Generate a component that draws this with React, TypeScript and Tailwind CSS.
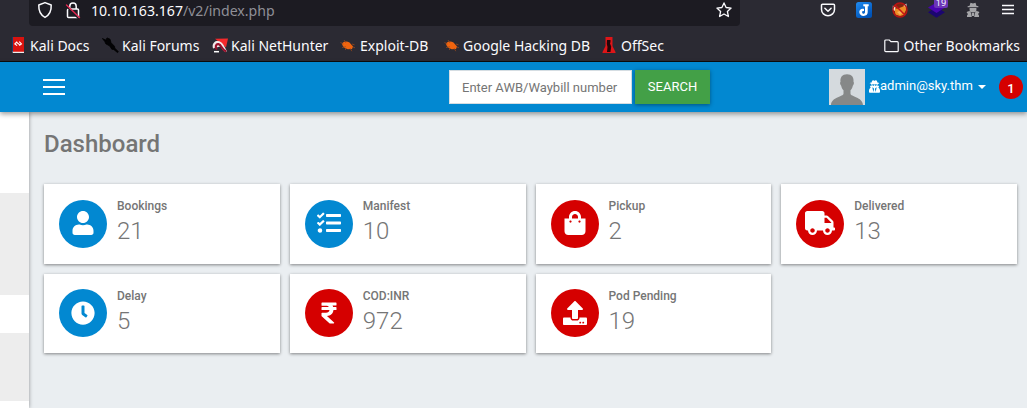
import type { ReactNode } from 'react';
import {
  FaClock,
  FaRupeeSign,
  FaShoppingBag,
  FaTasks,
  FaTruck,
  FaUpload,
  FaUser,
  FaUserSecret,
} from 'react-icons/fa';

const BLUE = 'bg-[#0288d1]';
const RED = 'bg-[#d50000]';

function Shield() {
  return (
    <svg width="16" height="18" viewBox="0 0 16 18" fill="none" stroke="#fbfbfe" strokeWidth="1.5" strokeLinejoin="round">
      <path d="M8 1.600 14.200 4c.3 5.600-1.900 10-6.200 12.400C3.700 14 1.500 9.600 1.800 4z" />
    </svg>
  );
}

function BrokenLock() {
  return (
    <svg width="16" height="18" viewBox="0 0 16 18" fill="none">
      <path d="M4.800 8V5.200a3.200 3.200 0 0 1 6.400 0V8M3.500 8h9a1 1 0 0 1 1 1v6.500a1 1 0 0 1-1 1h-9a1 1 0 0 1-1-1V9a1 1 0 0 1 1-1z" stroke="#fbfbfe" strokeWidth="1.500" />
      <path d="m1.500 5.500 13 13" stroke="#1c1b22" strokeWidth="1.500" />
      <path d="m1.500 4 13 12.500" stroke="#e22850" strokeWidth="1.400" strokeLinecap="round" />
    </svg>
  );
}

function Star() {
  return (
    <svg width="16" height="16" viewBox="0 0 16 16" fill="none" stroke="#fbfbfe" strokeWidth="1.300" strokeLinejoin="round">
      <path d="m8 .9 2.100 4.600 5 .6-3.700 3.400 1 5L8 12l-4.400 2.500 1-5L.9 6.100l5-.6z" />
    </svg>
  );
}

function Pocket() {
  return (
    <svg width="16" height="14" viewBox="0 0 16 14" fill="none" stroke="#fbfbfe" strokeWidth="1.500" strokeLinecap="round" strokeLinejoin="round">
      <path d="M2.500 1.200h11a1 1 0 0 1 1 1V6.500a6.500 6.200 0 0 1-13 0V2.200a1 1 0 0 1 1-1z" />
      <path d="m4.900 5.300 3.100 3 3.100-3" />
    </svg>
  );
}

function JoplinTile() {
  return (
    <svg width="16" height="16" viewBox="0 0 16 16">
      <defs>
        <linearGradient id="tile" x1="0" y1="0" x2="0.600" y2="1">
          <stop offset="0" stopColor="#1f8bf0" />
          <stop offset="1" stopColor="#0053b8" />
        </linearGradient>
      </defs>
      <rect width="16" height="16" rx="2.500" fill="url(#tile)" />
      <path d="M7.300 2.300h5.400v2h-1v6c0 2.200-1.700 3.600-4 3.600-2.600 0-4.400-1.500-4.400-3.900 0-2 1.400-3.300 3.300-3.300.7 0 1.100.1 1.400.3v2.200c-1.200-.3-1.900.1-1.900 1s.6 1.500 1.500 1.500 1.400-.6 1.400-1.700V5c0-.5-.2-.7-.7-.7h-1z" fill="#fff" />
    </svg>
  );
}

function BlockedFox() {
  return (
    <svg width="16" height="16" viewBox="0 0 16 16">
      <circle cx="8" cy="8" r="7" fill="#7f2410" />
      <path d="M2.200 6 5 6.700l5-1.700 3.800-2 .2 5-2.500 5L8 14l-4.500-1.500z" fill="#ef8b24" />
      <path d="M.8 3.500 3.500 5 2.500 9 .8 8zM11.500 3.500l3-2v4.500z" fill="#f6e8d8" />
      <path d="m5 10 3-1 3.500 1L8 13z" fill="#f5b15a" />
      <circle cx="8" cy="8" r="7" fill="none" stroke="#b81414" strokeWidth="1.400" />
      <path d="m3 3 10 10" stroke="#c81414" strokeWidth="1.500" />
    </svg>
  );
}

function Layers() {
  return (
    <svg width="17" height="18" viewBox="0 0 17 18">
      <path d="m0 12.200 8.500-5 8.500 5-8.500 5.500z" fill="#1b0670" />
      <path d="m0 7.500 8.500-5 8.500 5L8.500 13z" fill="#4a05b0" />
    </svg>
  );
}

function Spy() {
  return (
    <svg width="14" height="16" viewBox="0 0 14 16" fill="#a5a5a8">
      <path d="M4.500.8 7 1.500 9.500.8l.9 3 2 .5v1H1.600v-1l2-.5zM3.600 6h6.800v2a3.400 2.500 0 0 1-6.800 0z" />
      <path d="m1.500 9.500 2.200-.4 1.500 2L5.800 15H1v-1.500L2 12 .6 10.500zM12.500 9.500l-2.200-.4-1.500 2L8.200 15H13v-1.500L12 12l1.400-1.500z" />
      <path d="M6 11h2v3H6z" />
    </svg>
  );
}

function KaliDocs() {
  return (
    <svg width="14" height="17" viewBox="0 0 14 17">
      <path d="M1 0h2v15H1z" fill="#123e72" />
      <path d="M2 0h11v15H2z" fill="#d8130f" />
      <path d="M1.300 14.800h11.700V16H2z" fill="#eee" />
      <path d="m6.100 4.700-2.200 2.200 2.200 1.700M8.200 4.700l2.200 2.200-2.200 1.700M5.800 5.500l3 2.400" fill="none" stroke="#fff" strokeWidth="1.200" />
    </svg>
  );
}

function KaliForums() {
  return (
    <svg width="17" height="17" viewBox="0 0 17 17">
      <path d="M.4 1.500 4 3.200 5 .9l3 1.300 1 3.500 3.400 3.500.4 2 3.600 3.500-1 .8-3.600-3-2-.3-2-3.200-4-2.200-1-2.300z" fill="#030305" stroke="#000" strokeWidth=".8" />
    </svg>
  );
}

function NetHunter() {
  return (
    <svg width="17" height="15" viewBox="0 0 17 15">
      <path d="M3 .8 16 .5l-2 9z" fill="#f52a2c" />
      <path d="M1 10.500C-.5 5.500 3 2.500 6 3c4 .2 6 4.500 9 10.300-2.600 1.700-5.400-2.300-6-5" fill="#f3e9ea" />
      <path d="M5 11.500C2.500 9 4 5.800 6.500 6.200c3.200.5 3.200 5.800 7.700 7.300" fill="none" stroke="#98112c" strokeWidth="2.200" />
      <path d="M2 13.700h5" stroke="#fff" strokeWidth="1.500" />
    </svg>
  );
}

function Bug() {
  return (
    <svg width="16" height="13" viewBox="0 0 16 13">
      <path d="M2 4.500C3.500 2 7 1.800 9.500 3.500l3.500 4-1 2.500-4 .3C5 10 2.500 7.500 2 4.500z" fill="#f0640f" />
      <path d="m.5 3.500 3 1.500M4 1l2 3M12 5l2.500.8M13 8l2 .8M2 8.500l4-.8M5 11l2-2M10 9l1.800 3.200" stroke="#a04c1c" strokeWidth=".7" />
    </svg>
  );
}

function OffSecMark() {
  return (
    <svg width="14" height="17" viewBox="0 0 14 17">
      <path d="M3.500 0h7v9L13.500 15v1H.5v-1l3-6z" fill="#de1518" />
      <path d="M5 3h3.500v2L8 6.500l1.200 3-.7 5.500H5l.5-5-.7-3z" fill="#240608" />
    </svg>
  );
}

function Bookmark({ icon, label, className }: { icon: ReactNode; label: string; className: string }) {
  return (
    <div className={`flex shrink-0 items-center whitespace-nowrap ${className}`}>
      <span className="flex w-[18px] shrink-0 justify-center">{icon}</span>
      <span className="-mt-px">{label}</span>
    </div>
  );
}

function BrowserChrome() {
  return (
    <div className="h-[62px] border-b border-[#0c0c0d] bg-[#2b2a33] font-['Noto_Sans',sans-serif] text-[#fbfbfe]">
      <div className="flex h-[26px] pl-[29px]">
        <div className="flex h-[26px] w-[711px] items-start rounded-b-[4px] bg-[#1c1b22] pl-2">
          <span className="mt-px"><Shield /></span>
          <span className="ml-3 mt-px"><BrokenLock /></span>
          <span className="ml-[10px] text-[14.1px] leading-[21px]">
            10.10.163.167<span className="text-[#8f8f97]">/v2/index.php</span>
          </span>
          <span className="ml-auto mr-2 mt-[2px]"><Star /></span>
        </div>
        <div className="flex flex-1 items-start">
          <span className="ml-[80px] mt-[3px]"><Pocket /></span>
          <span className="ml-5 mt-[2px]"><JoplinTile /></span>
          <span className="ml-5 mt-[2px]"><BlockedFox /></span>
          <span className="relative ml-5">
            <Layers />
            <span className="absolute left-[6px] top-[-5px] h-[13px] w-[14px] rounded-[2px] bg-[#6b35b8] text-center text-[9px] leading-[15px]">19</span>
          </span>
          <span className="ml-[21px] mt-[2px]"><Spy /></span>
          <svg className="ml-[22px] mt-[4px]" width="12" height="12" viewBox="0 0 12 12">
            <path d="M0 1.500h12M0 5.500h12M0 9.500h12" stroke="#fbfbfe" strokeWidth="1.300" />
          </svg>
        </div>
      </div>
      <div className="flex h-[35px] items-center pt-[4px] text-[14px]">
        <Bookmark className="ml-[9px] w-[92px] gap-[3px]" icon={<KaliDocs />} label="Kali Docs" />
        <Bookmark className="w-[110px] gap-[3px]" icon={<KaliForums />} label="Kali Forums" />
        <Bookmark className="w-[128px] gap-[2px]" icon={<NetHunter />} label="Kali NetHunter" />
        <Bookmark className="w-[104px] gap-[3px]" icon={<Bug />} label="Exploit-DB" />
        <Bookmark className="w-[157px] gap-[2px]" icon={<Bug />} label="Google Hacking DB" />
        <Bookmark className="gap-[3px]" icon={<OffSecMark />} label="OffSec" />
        <div className="ml-auto mr-[7px] flex items-center gap-[5px]">
          <svg width="15" height="14" viewBox="0 0 15 14" fill="none" stroke="#fbfbfe" strokeWidth="1.200">
            <path d="M.8 2a1 1 0 0 1 1-1h3.500l1.700 1.700h6.200a1 1 0 0 1 1 1v8a1 1 0 0 1-1 1H1.800a1 1 0 0 1-1-1z" />
          </svg>
          <span className="-mt-px">Other Bookmarks</span>
        </div>
      </div>
    </div>
  );
}

function Header() {
  return (
    <header className="relative z-10 flex h-[50px] items-start bg-[#0288d1] text-white shadow-[0_2px_5px_rgba(0,0,0,0.4)]">
      <button className="ml-[43px] mt-[17px] flex w-[22px] flex-col gap-[5px]" aria-label="Menu">
        <span className="h-[2px] w-full bg-white" />
        <span className="h-[2px] w-full bg-white" />
        <span className="h-[2px] w-full bg-white" />
      </button>
      <input
        className="ml-[384px] mt-2 h-[34px] w-[183px] border border-[#d5dde2] bg-white px-3 text-[13px] placeholder:text-[#757575]"
        placeholder="Enter AWB/Waybill number"
      />
      <button className="ml-[3px] mt-2 h-[34px] w-[75px] bg-[#43a047] text-[13px] shadow-[0_1px_4px_rgba(0,0,0,0.4)]">SEARCH</button>
      <svg className="ml-[119px] mt-[7px]" width="36" height="36" viewBox="0 0 36 36">
        <rect width="36" height="36" fill="#d5dade" />
        <path d="M18 5.300c4.800 0 7 3 6.500 7.500.8.500.4 3.200-.7 4-.4 2.200-1.300 3.600-2.300 4.500v3.500c0 2.800 12 3.200 12.500 11.200H2c.5-8 12.500-8.400 12.500-11.200v-3.500c-1-.9-1.900-2.300-2.300-4.500-1.100-.8-1.500-3.500-.7-4C11 8.300 13.200 5.300 18 5.300z" fill="#868888" />
      </svg>
      <div className="ml-1 mt-[14px] flex h-5 items-center text-[13px]">
        <FaUserSecret className="mt-px h-[13px] w-[11px] shrink-0" />
        <span>admin@sky.thm</span>
        <svg className="ml-[5px] mt-[2px]" width="8" height="4" viewBox="0 0 8 4">
          <path d="M0 0h8L4 4z" fill="#fff" />
        </svg>
      </div>
      <span className="ml-auto mr-1 mt-[13px] flex h-6 w-6 shrink-0 items-center justify-center rounded-full bg-[#d50000] pt-[3px] text-[13px] font-medium leading-none">1</span>
    </header>
  );
}

const cards = [
  { label: 'Bookings', value: '21', color: BLUE, icon: <FaUser className="size-6" /> },
  { label: 'Manifest', value: '10', color: BLUE, icon: <FaTasks className="size-6" /> },
  { label: 'Pickup', value: '2', color: RED, icon: <FaShoppingBag className="size-6" /> },
  { label: 'Delivered', value: '13', color: RED, icon: <FaTruck className="h-6 w-[30px]" /> },
  { label: 'Delay', value: '5', color: BLUE, icon: <FaClock className="size-6" /> },
  { label: 'COD:INR', value: '972', color: RED, icon: <FaRupeeSign className="size-6" /> },
  { label: 'Pod Pending', value: '19', color: RED, icon: <FaUpload className="size-6" /> },
];

function Card({ label, value, color, icon, second }: (typeof cards)[number] & { second: boolean }) {
  return (
    <div className="flex bg-white pl-[15px] shadow-[0_1px_3px_rgba(0,0,0,0.45)]">
      <div className={`flex size-12 shrink-0 items-center justify-center rounded-full text-white ${color} ${second ? 'mt-[15px]' : 'mt-4 pb-[2px]'}`}>
        {icon}
      </div>
      <div className="ml-[10px] mt-[14px] text-[#757575]">
        <div className="text-[12px] font-medium leading-4">{label}</div>
        <div className="text-[24px] font-light leading-[34px]">{value}</div>
      </div>
    </div>
  );
}

export default function App() {
  return (
    <div className="flex h-[408px] w-[1027px] flex-col overflow-hidden bg-[#eaeef1] font-['Roboto',sans-serif]">
      <BrowserChrome />
      <Header />
      <div className="flex flex-1">
        <aside className="flex w-[29px] shrink-0 flex-col bg-white shadow-[0_0_4px_rgba(0,0,0,0.4)]">
          <div className="h-[81px]" />
          <div className="h-[102px] bg-[#ededed]" />
          <div className="h-[38px]" />
          <div className="h-[68px] bg-[#ededed]" />
        </aside>
        <main className="flex-1 pl-[15px] pr-[10px]">
          <h1 className="pt-4 text-[24px] font-medium leading-8 text-[#757575]">Dashboard</h1>
          <div className="mt-6 grid grid-cols-4 grid-rows-[80px_79px] gap-[10px]">
            {cards.map((card, i) => (
              <Card key={card.label} {...card} second={i >= 4} />
            ))}
          </div>
        </main>
      </div>
    </div>
  );
}
